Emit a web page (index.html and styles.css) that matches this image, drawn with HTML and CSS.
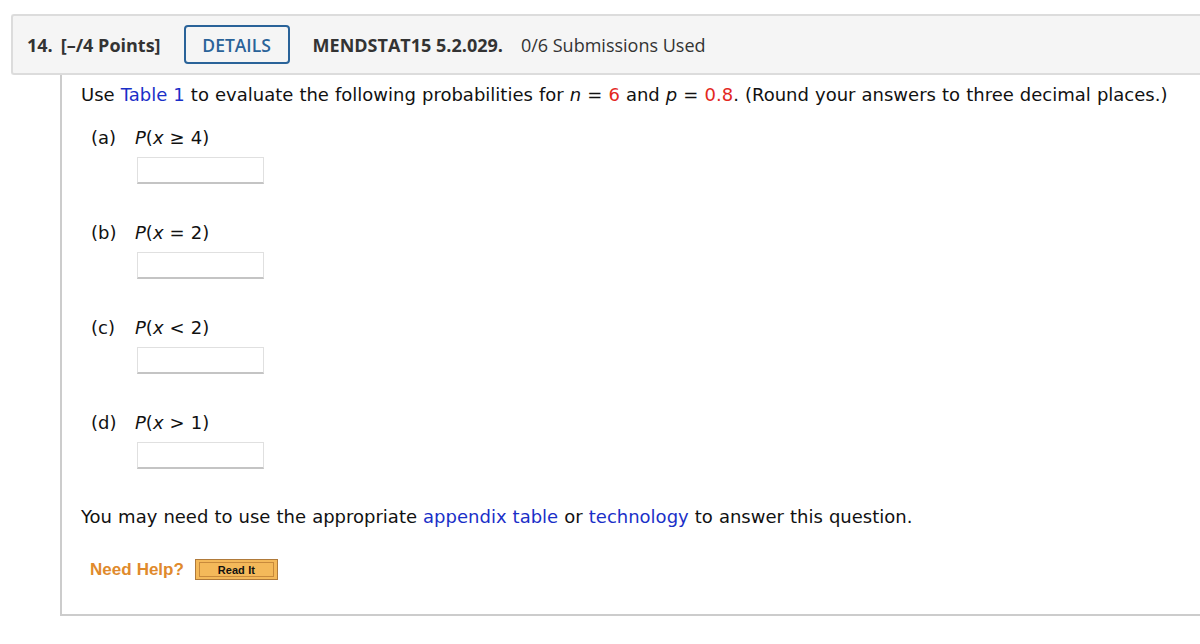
FILE: index.html
```html
<!DOCTYPE html>
<html>
<head>
<meta charset="utf-8">
<link rel="stylesheet" href="styles.css">
</head>
<body>
<div class="question">
  <div class="header">
    <span class="qnum">14.</span>
    <span class="points">[–/4 Points]</span>
    <span class="details">DETAILS</span>
    <span class="code">MENDSTAT15 5.2.029.</span>
    <span class="subs">0/6 Submissions Used</span>
  </div>
  <div class="content">
    <p class="intro">Use <a class="link">Table 1</a> to evaluate the following probabilities for <i>n</i> = <span class="red">6</span> and <i>p</i> = <span class="red">0.8</span>. (Round your answers to three decimal places.)</p>
    <div class="part">
      <div class="label"><span class="letter">(a)</span><span class="expr"><i>P</i>(<i>x</i> ≥ 4)</span></div>
      <div class="answer"></div>
    </div>
    <div class="part">
      <div class="label"><span class="letter">(b)</span><span class="expr"><i>P</i>(<i>x</i> = 2)</span></div>
      <div class="answer"></div>
    </div>
    <div class="part">
      <div class="label"><span class="letter">(c)</span><span class="expr"><i>P</i>(<i>x</i> &lt; 2)</span></div>
      <div class="answer"></div>
    </div>
    <div class="part">
      <div class="label"><span class="letter">(d)</span><span class="expr"><i>P</i>(<i>x</i> &gt; 1)</span></div>
      <div class="answer"></div>
    </div>
    <p class="note">You may need to use the appropriate <a class="link">appendix table</a> or <a class="link">technology</a> to answer this question.</p>
    <div class="help">
      <span class="help-label">Need Help?</span>
      <span class="readit"><span class="readit-inner">Read It</span></span>
    </div>
  </div>
</div>
</body>
</html>
```

FILE: styles.css
```css
html, body {
  margin: 0;
  padding: 0;
  background: #ffffff;
  overflow: hidden;
}

.question {
  padding-top: 14px;
  padding-left: 11px;
}

.header {
  box-sizing: border-box;
  height: 61px;
  border: 2px solid #dcdcdc;
  border-right: none;
  border-radius: 3px 0 0 3px;
  background: #f5f5f5;
  display: flex;
  align-items: center;
  padding-left: 14px;
  font-family: "Open Sans", "DejaVu Sans", sans-serif;
  font-size: 18px;
  color: #333333;
}

.qnum {
  font-weight: 700;
  margin-right: 8px;
}

.points {
  font-weight: 700;
  margin-right: 23px;
}

.details {
  box-sizing: border-box;
  width: 106px;
  height: 39px;
  border: 2px solid #2a6399;
  border-radius: 4px;
  color: #2a6399;
  font-weight: 600;
  font-size: 17.5px;
  display: flex;
  align-items: center;
  justify-content: center;
  margin-right: 23px;
  flex-shrink: 0;
}

.code {
  font-weight: 700;
  margin-right: 18px;
}

.subs {
  font-weight: 400;
}

.content {
  margin-left: 49px;
  height: 541px;
  box-sizing: border-box;
  border-left: 2px solid #cccccc;
  border-bottom: 2px solid #cccccc;
  padding-left: 19px;
  padding-top: 10px;
  font-family: "DejaVu Sans", Verdana, sans-serif;
  font-size: 18px;
  word-spacing: 0.35px;
  color: #111111;
}

.intro {
  margin: 0;
  line-height: 20px;
}

.link {
  color: #1a2fc8;
  text-decoration: none;
}

.red {
  color: #e3281e;
}

.part {
  padding-left: 10px;
  margin-top: 23px;
}

.part + .part {
  margin-top: 39px;
}

.label {
  display: flex;
  line-height: 20px;
}

.letter {
  width: 44px;
}

.answer {
  box-sizing: border-box;
  width: 127px;
  height: 27px;
  margin-left: 46px;
  margin-top: 9px;
  border: 1px solid #e0e0e0;
  border-bottom: 2px solid #c4c4c4;
  background: #ffffff;
}

.note {
  margin: 38px 0 0 0;
  line-height: 20px;
}

.help {
  display: flex;
  align-items: center;
  margin-top: 32px;
  padding-left: 9px;
}

.help-label {
  font-family: "Liberation Sans", Arial, sans-serif;
  font-weight: 700;
  font-size: 17px;
  color: #e08a2c;
  margin-right: 11px;
}

.readit {
  box-sizing: border-box;
  width: 83px;
  height: 21px;
  border: 1px solid #b07a3a;
  background: #f4b95a;
  padding: 2px 3px;
  display: flex;
}

.readit-inner {
  flex: 1;
  border: 1px solid #c88a3c;
  font-family: "Liberation Sans", Arial, sans-serif;
  font-weight: 700;
  font-size: 11px;
  color: #111111;
  display: flex;
  align-items: center;
  justify-content: center;
}
```
